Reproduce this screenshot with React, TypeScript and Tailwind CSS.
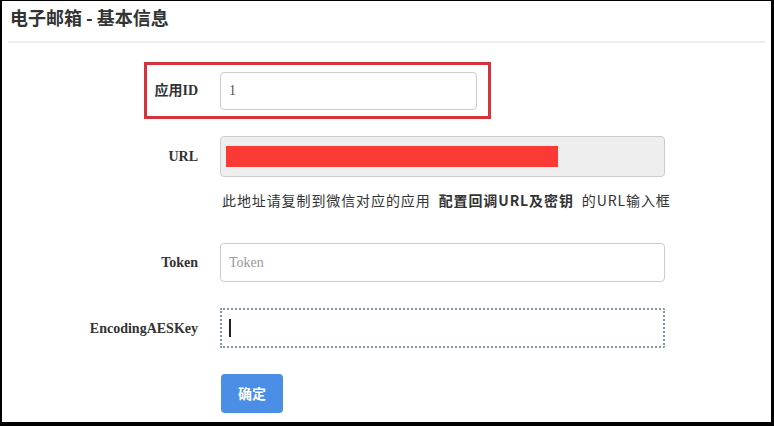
import React from "react";

const serif = "font-['Liberation_Serif','Noto_Sans_CJK_SC',serif]";

function Label({ children }: { children: React.ReactNode }) {
  return (
    <div className={`w-[196px] shrink-0 text-right text-[14px] font-bold text-[#333] ${serif}`}>
      {children}
    </div>
  );
}

export default function App() {
  return (
    <div className="flex h-[426px] w-[774px] flex-col border-b-[4px] border-l-2 border-r-[3px] border-t border-black bg-white font-['Noto_Sans_CJK_SC',sans-serif]">
      {/* Header */}
      <div className="mx-[6px] flex h-[42px] items-center border-b-2 border-[#ececec] pl-[2px] pb-[7px]">
        <h1 className="text-[18px] font-bold text-[#333]">电子邮箱 - 基本信息</h1>
      </div>

      {/* 应用ID, highlighted */}
      <div className="ml-[142px] mt-[19px] flex h-[57px] w-[347px] items-center border-[3px] border-[#d4333b]">
        <div className={`w-[51px] shrink-0 text-right text-[14px] font-bold text-[#333] ${serif}`}>
          应用ID
        </div>
        <div className={`ml-[22px] flex h-[38px] w-[257px] items-center rounded-[4px] border border-[#ccc] px-[8px] text-[14px] text-[#555] ${serif}`}>
          1
        </div>
      </div>

      {/* URL */}
      <div className="mt-[17px] flex items-center">
        <Label>URL</Label>
        <div className="ml-[22px] flex h-[41px] w-[445px] items-center rounded-[4px] border border-[#ccc] bg-[#eee] px-[5px]">
          <div className="h-[21px] w-[332px] bg-[#fb3a36]" />
        </div>
      </div>
      <div className="ml-[220px] mt-[13px] text-[14px] tracking-[0.9px] text-[#333]">
        此地址请复制到微信对应的应用&nbsp; <span className="font-bold">配置回调URL及密钥</span>&nbsp; 的URL输入框
      </div>

      {/* Token */}
      <div className="mt-[32px] flex items-center">
        <Label>Token</Label>
        <div className={`ml-[22px] flex h-[39px] w-[445px] items-center rounded-[4px] border border-[#ccc] px-[8px] text-[14px] text-[#999] ${serif}`}>
          Token
        </div>
      </div>

      {/* EncodingAESKey */}
      <div className="mt-[26px] flex items-center">
        <Label>EncodingAESKey</Label>
        <div className="ml-[22px] flex h-[40px] w-[445px] items-center rounded-[2px] border-2 border-dotted border-[#7f97ad] px-[7px]">
          <span className="h-[18px] w-[2px] bg-[#222]" />
        </div>
      </div>

      {/* Submit */}
      <div className="ml-[219px] mt-[26px]">
        <button className="flex h-[39px] w-[62px] items-center justify-center rounded-[4px] bg-[#4a8ee6] text-[14px] font-bold text-white">
          确定
        </button>
      </div>
    </div>
  );
}
